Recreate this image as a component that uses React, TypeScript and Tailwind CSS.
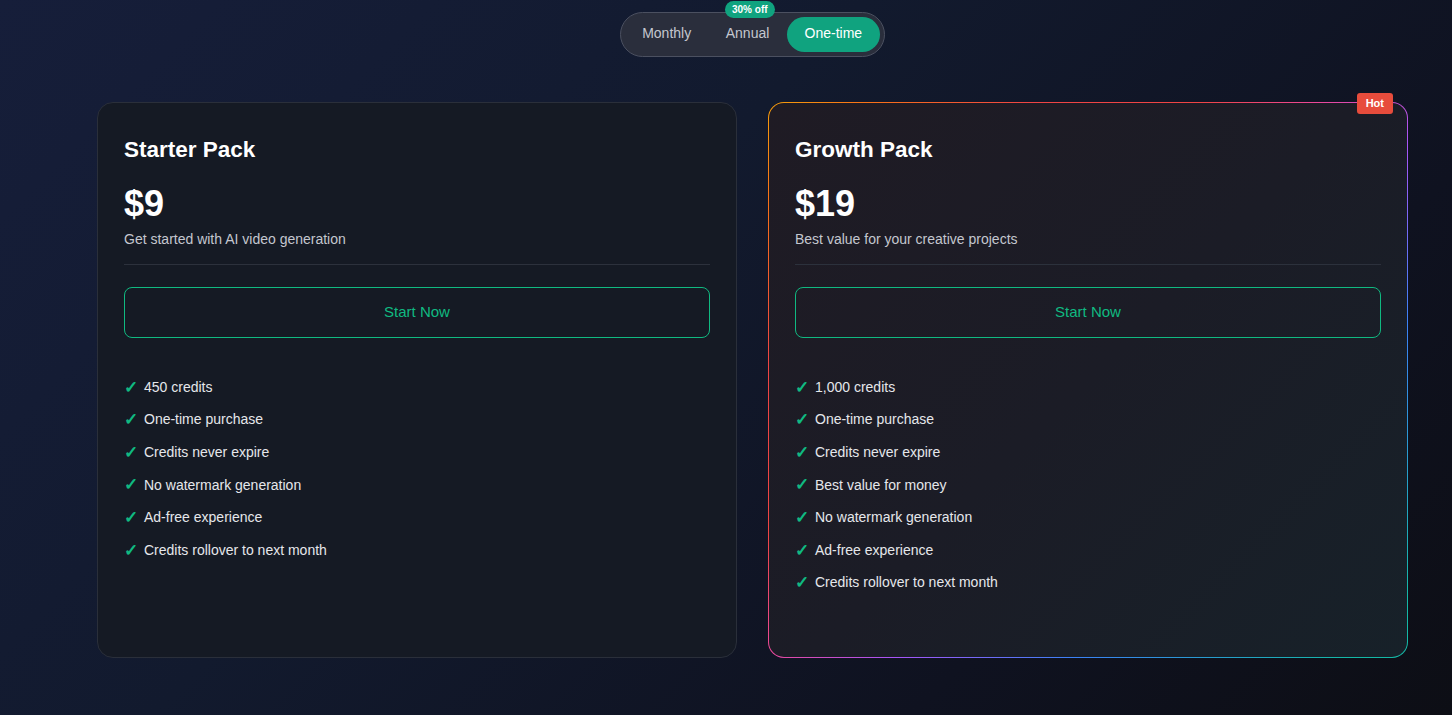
import React, { useState } from "react";

type Plan = {
  name: string;
  price: string;
  tagline: string;
  features: string[];
  hot?: boolean;
};

const plans: Plan[] = [
  {
    name: "Starter Pack",
    price: "$9",
    tagline: "Get started with AI video generation",
    features: [
      "450 credits",
      "One-time purchase",
      "Credits never expire",
      "No watermark generation",
      "Ad-free experience",
      "Credits rollover to next month",
    ],
  },
  {
    name: "Growth Pack",
    price: "$19",
    tagline: "Best value for your creative projects",
    hot: true,
    features: [
      "1,000 credits",
      "One-time purchase",
      "Credits never expire",
      "Best value for money",
      "No watermark generation",
      "Ad-free experience",
      "Credits rollover to next month",
    ],
  },
];

const CardBody = ({ plan }: { plan: Plan }) => (
  <div className="flex h-full flex-col px-[26px] pt-[32px]">
    <h3 className="text-[22.5px] font-bold leading-[30px] text-white">{plan.name}</h3>
    <div className="mt-[18px] text-[36px] font-bold leading-[42px] text-white">{plan.price}</div>
    <p className="mt-[4px] text-[14px] leading-[20px] text-[#c4c7cf]">{plan.tagline}</p>
    <div className="mt-[15px] h-px bg-[#2c313c]" />
    <button className="mt-[22px] h-[51px] w-full rounded-[8px] border border-[#10b981] text-[15px] text-[#10b981]">
      Start Now
    </button>
    {/* feature list */}
    <ul className="mt-[33px] flex flex-col">
      {plan.features.map((f) => (
        <li key={f} className="flex h-[32.6px] items-center text-[14px] text-[#e5e7eb]">
          <span className="w-[20px] text-[17px] font-semibold text-[#10b981]">✓</span>
          {f}
        </li>
      ))}
    </ul>
  </div>
);

export default function App() {
  const [period, setPeriod] = useState("One-time");

  return (
    <div
      className="min-h-[715px] w-full bg-[linear-gradient(135deg,#161e3a_0%,#121a2e_40%,#0f1220_75%,#0d0e15_100%)] pl-[97px]"
      style={{ fontFamily: '"Liberation Sans", Arial, sans-serif' }}
    >
      <div className="w-[1311px]">
        {/* billing toggle */}
        <div className="flex justify-center pt-[12px]">
          <div className="relative flex h-[45px] w-[265px] items-center rounded-full border border-[#4b5060] bg-[#2a2e3c] px-[4px]">
            <span className="absolute left-[104px] top-[-12px] rounded-full bg-[#10a37f] px-[7px] py-[2px] text-[10px] font-bold leading-[13px] text-white">
              30% off
            </span>
            {["Monthly", "Annual", "One-time"].map((p) => (
              <button
                key={p}
                onClick={() => setPeriod(p)}
                className={`h-[35px] rounded-full pb-[2px] text-[14px] ${
                  period === p
                    ? "w-[94px] bg-[#10a37f] text-white"
                    : p === "Monthly"
                    ? "w-[84px] text-[#c4c7cf]"
                    : "w-[79px] text-[#c4c7cf]"
                }`}
              >
                {p}
              </button>
            ))}
          </div>
        </div>

        {/* cards */}
        <div className="mt-[45px] grid grid-cols-[640px_640px] gap-[31px]">
          <div className="h-[556px] rounded-[16px] border border-[#2a2f3a] bg-[#151a24]">
            <CardBody plan={plans[0]} />
          </div>
          <div className="relative h-[556px] rounded-[16px] bg-[linear-gradient(135deg,#f59e0b_0%,#f97316_8%,#ef4444_22%,#ef4444_36%,#ec4899_46%,#a855f7_57%,#3b82f6_72%,#14b8a6_95%)] p-px">
            <span className="absolute right-[15px] top-[-9px] rounded-[3px] bg-[#e74c3c] px-[9px] py-[4px] text-[11px] font-bold leading-[13px] text-white">
              Hot
            </span>
            <div className="h-full rounded-[15px] bg-[linear-gradient(135deg,#1f1b24_0%,#1b1c26_50%,#172129_100%)]">
              <CardBody plan={plans[1]} />
            </div>
          </div>
        </div>
      </div>
    </div>
  );
}
